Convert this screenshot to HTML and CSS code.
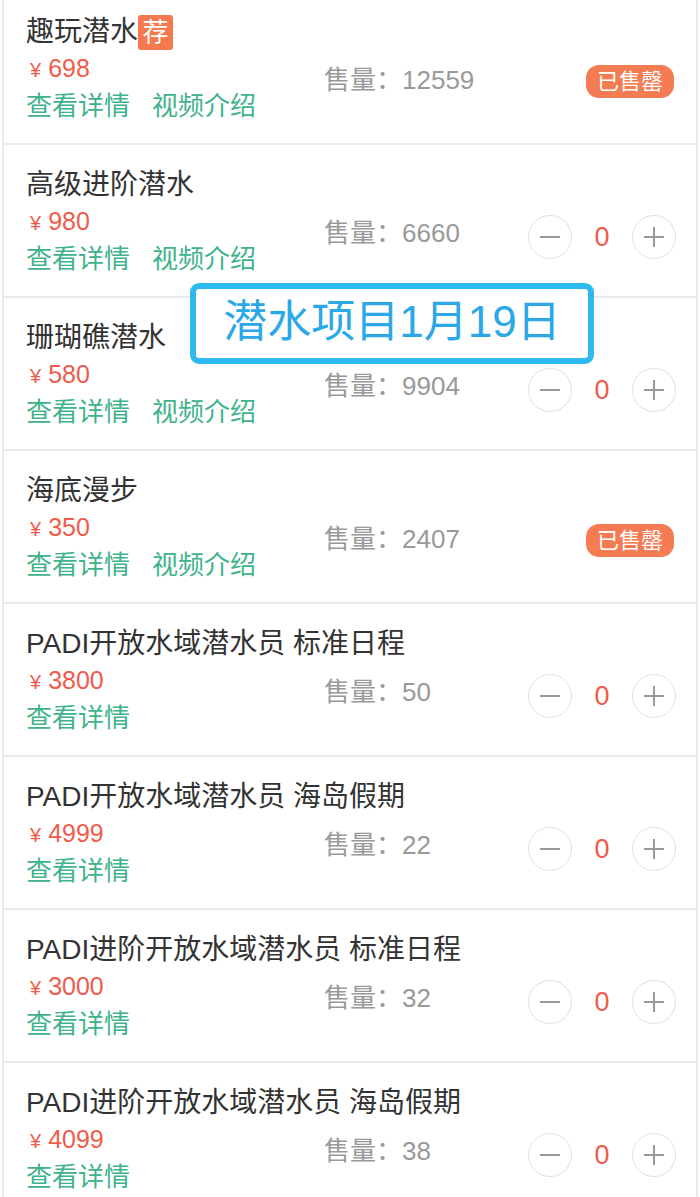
FILE: index.html
```html
<!DOCTYPE html>
<html lang="zh">
<head>
    <meta name="viewport" content="width=device-width, initial-scale=1.0">
    <title>潜水项目</title>
    <link rel="stylesheet" href="styles.css">
</head>
<body>

    <div class="list">
        <div class="item">
            <div class="title">趣玩潜水<span class="tag">荐</span></div>
            <div class="price"><span class="yen">¥</span>698</div>
            <div class="links"><a>查看详情</a><a>视频介绍</a></div>
            <div class="sales">售量：12559</div>
            <div class="action"><span class="soldout">已售罄</span></div>
        </div>

        <div class="item">
            <div class="title">高级进阶潜水</div>
            <div class="price"><span class="yen">¥</span>980</div>
            <div class="links"><a>查看详情</a><a>视频介绍</a></div>
            <div class="sales">售量：6660</div>
            <div class="action stepper"><span class="btn minus"></span><span class="num">0</span><span class="btn plus"></span></div>
        </div>

        <div class="item">
            <div class="title">珊瑚礁潜水</div>
            <div class="price"><span class="yen">¥</span>580</div>
            <div class="links"><a>查看详情</a><a>视频介绍</a></div>
            <div class="sales">售量：9904</div>
            <div class="action stepper"><span class="btn minus"></span><span class="num">0</span><span class="btn plus"></span></div>
        </div>

        <div class="item">
            <div class="title">海底漫步</div>
            <div class="price"><span class="yen">¥</span>350</div>
            <div class="links"><a>查看详情</a><a>视频介绍</a></div>
            <div class="sales">售量：2407</div>
            <div class="action"><span class="soldout">已售罄</span></div>
        </div>

        <div class="item">
            <div class="title">PADI开放水域潜水员 标准日程</div>
            <div class="price"><span class="yen">¥</span>3800</div>
            <div class="links"><a>查看详情</a></div>
            <div class="sales">售量：50</div>
            <div class="action stepper"><span class="btn minus"></span><span class="num">0</span><span class="btn plus"></span></div>
        </div>

        <div class="item">
            <div class="title">PADI开放水域潜水员 海岛假期</div>
            <div class="price"><span class="yen">¥</span>4999</div>
            <div class="links"><a>查看详情</a></div>
            <div class="sales">售量：22</div>
            <div class="action stepper"><span class="btn minus"></span><span class="num">0</span><span class="btn plus"></span></div>
        </div>

        <div class="item">
            <div class="title">PADI进阶开放水域潜水员 标准日程</div>
            <div class="price"><span class="yen">¥</span>3000</div>
            <div class="links"><a>查看详情</a></div>
            <div class="sales">售量：32</div>
            <div class="action stepper"><span class="btn minus"></span><span class="num">0</span><span class="btn plus"></span></div>
        </div>

        <div class="item">
            <div class="title">PADI进阶开放水域潜水员 海岛假期</div>
            <div class="price"><span class="yen">¥</span>4099</div>
            <div class="links"><a>查看详情</a></div>
            <div class="sales">售量：38</div>
            <div class="action stepper"><span class="btn minus"></span><span class="num">0</span><span class="btn plus"></span></div>
        </div>
    </div>

    <div class="label">潜水项目1月19日</div>

</body>
</html>
```

FILE: styles.css
```css
body, html {
    margin: 0;
    overflow: hidden;
    background: #fff;
    font-family: "Liberation Sans", "Noto Sans CJK SC", sans-serif;
}

.list {
    margin: -8px 2px 0;
    border-left: 2px solid #ebebeb;
    border-right: 2px solid #ebebeb;
}

.item {
    display: grid;
    grid-template-columns: 298px 1fr auto;
    grid-template-rows: 36px 36px 40px;
    padding: 22px 20px 17px 22px;
    border-bottom: 2px solid #ebebeb;
}

.title {
    grid-column: 1 / 4;
    font-size: 28px;
    line-height: 36px;
    color: #333;
    display: flex;
    align-items: center;
    white-space: nowrap;
}

.tag {
    display: inline-block;
    width: 35px;
    height: 35px;
    line-height: 35px;
    text-align: center;
    background: #f5794f;
    color: #fff;
    border-radius: 3px;
    font-size: 26px;
}

.price {
    grid-column: 1;
    font-size: 25px;
    line-height: 36px;
    color: #f05b4b;
    padding-left: 4px;
}

.yen {
    font-size: 20px;
    margin-right: 7px;
}

.links {
    grid-column: 1;
    display: flex;
    gap: 22px;
    font-size: 26px;
    line-height: 40px;
    color: #3fb38b;
}

.sales {
    grid-column: 2;
    grid-row: 2 / 4;
    align-self: center;
    margin-bottom: 22px;
    font-size: 26px;
    color: #999;
}

.action {
    grid-column: 3;
    grid-row: 2 / 4;
    align-self: center;
    margin-bottom: 8px;
    display: flex;
    align-items: center;
}

.soldout {
    display: inline-block;
    margin: 0 2px 6px 0;
    padding: 0 11px;
    height: 33px;
    line-height: 33px;
    border-radius: 13px;
    background: #f47b52;
    color: #fff;
    font-size: 22px;
}

.btn {
    position: relative;
    width: 42px;
    height: 42px;
    border: 1px solid #e2e2e2;
    border-radius: 50%;
}

.btn::before,
.plus::after {
    content: '';
    position: absolute;
    left: 11px;
    top: 20px;
    width: 20px;
    height: 2px;
    background: #999;
}

.plus::after {
    left: 20px;
    top: 11px;
    width: 2px;
    height: 20px;
}

.num {
    width: 60px;
    text-align: center;
    font-size: 27px;
    color: #f05b4b;
}

.label {
    position: absolute;
    left: 190px;
    top: 283px;
    width: 392px;
    height: 69px;
    border: 6px solid #2fb9f1;
    border-radius: 9px;
    background: #fff;
    color: #2aa8e8;
    font-size: 44px;
    line-height: 66px;
    text-align: center;
}
```
